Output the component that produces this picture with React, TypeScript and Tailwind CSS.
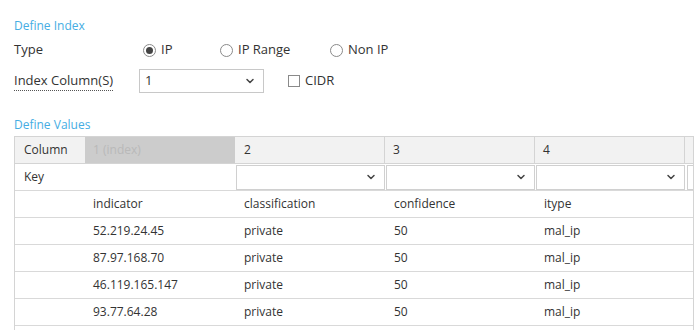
import { ChevronDown } from 'lucide-react';

const rows = [
  ['52.219.24.45', 'private', '50', 'mal_ip'],
  ['87.97.168.70', 'private', '50', 'mal_ip'],
  ['46.119.165.147', 'private', '50', 'mal_ip'],
  ['93.77.64.28', 'private', '50', 'mal_ip'],
];

function Radio({ label, checked }: { label: string; checked?: boolean }) {
  return (
    <label className="flex items-center gap-[5px]">
      <span className="flex h-[13px] w-[13px] items-center justify-center rounded-full border border-[#8a8a8a] bg-white">
        {checked && <span className="h-[7px] w-[7px] rounded-full bg-[#444]" />}
      </span>
      <span>{label}</span>
    </label>
  );
}

function KeySelect() {
  return (
    <div className="ml-px flex h-[25px] w-[149px] items-center justify-end border border-[#d0d0d0] bg-white pr-[7px]">
      <ChevronDown className="h-[12px] w-[12px] text-[#444]" strokeWidth={3} />
    </div>
  );
}

export default function App() {
  return (
    <div className="h-[330px] w-[700px] overflow-hidden bg-white pl-[14px] text-[13px] text-[#333]" style={{ fontFamily: '"Open Sans", sans-serif' }}>
      {/* Define Index */}
      <div className="pt-[16px] text-[12px] leading-[20px] text-[#45ade3]">Define Index</div>

      <div className="mt-[2px] flex h-[24px] items-center">
        <span className="w-[129px]">Type</span>
        <div className="flex items-center">
          <div className="w-[77px]"><Radio label="IP" checked /></div>
          <div className="w-[110px]"><Radio label="IP Range" /></div>
          <Radio label="Non IP" />
        </div>
      </div>

      <div className="mt-[7px] flex h-[24px] items-center">
        <span className="w-[125px]">
          <span className="border-b border-dotted border-[#555] pb-[1px]">Index Column(S)</span>
        </span>
        <div className="flex h-[24px] w-[125px] items-center justify-between border border-[#c8c8c8] pl-[5px] pr-[7px]">
          <span>1</span>
          <ChevronDown className="h-[12px] w-[12px] text-[#444]" strokeWidth={3} />
        </div>
        <label className="ml-[24px] flex items-center gap-[5px]">
          <span className="h-[12px] w-[12px] border border-[#8a8a8a] bg-white" />
          <span>CIDR</span>
        </label>
      </div>

      {/* Define Values */}
      <div className="mt-[22px] text-[12px] leading-[20px] text-[#45ade3]">Define Values</div>

      <div className="mt-px w-[680px] overflow-hidden border-l border-r border-t border-[#d4d4d4] text-[12px]">
        <div className="flex w-[900px] flex-col">
          {/* header */}
          <div className="flex h-[27px] border-b border-[#d4d4d4] bg-[#f2f2f2]">
            <div className="flex w-[70px] items-center pl-[9px] text-[#333]">Column</div>
            <div className="flex w-[150px] items-center bg-[#cccccc] pl-[8px] text-[#b9b9b9]">1 (index)</div>
            <div className="flex w-[150px] items-center border-r border-[#d4d4d4] pl-[9px]">2</div>
            <div className="flex w-[150px] items-center border-r border-[#d4d4d4] pl-[8px]">3</div>
            <div className="flex w-[150px] items-center border-r border-[#d4d4d4] pl-[8px]">4</div>
            <div className="w-[150px]" />
          </div>

          {/* key row */}
          <div className="flex h-[27px] border-b border-[#d9d9d9]">
            <div className="flex w-[70px] items-center pl-[9px]">Key</div>
            <div className="w-[150px]" />
            <div className="flex w-[150px] items-center"><KeySelect /></div>
            <div className="flex w-[150px] items-center"><KeySelect /></div>
            <div className="flex w-[150px] items-center"><KeySelect /></div>
            <div className="flex w-[150px] items-center pl-px"><KeySelect /></div>
          </div>

          {/* field names */}
          <div className="flex h-[27px] border-b border-[#d9d9d9]">
            <div className="w-[70px]" />
            <div className="flex w-[150px] items-center pl-[8px]">indicator</div>
            <div className="flex w-[150px] items-center pl-[9px]">classification</div>
            <div className="flex w-[150px] items-center pl-[9px]">confidence</div>
            <div className="flex w-[150px] items-center pl-[9px]">itype</div>
          </div>

          {rows.map((r) => (
            <div key={r[0]} className="flex h-[27px] border-b border-[#d9d9d9]">
              <div className="w-[70px]" />
              <div className="flex w-[150px] items-center pl-[8px]">{r[0]}</div>
              <div className="flex w-[150px] items-center pl-[9px]">{r[1]}</div>
              <div className="flex w-[150px] items-center pl-[9px]">{r[2]}</div>
              <div className="flex w-[150px] items-center pl-[9px]">{r[3]}</div>
            </div>
          ))}
          <div className="h-[27px]" />
        </div>
      </div>
    </div>
  );
}
